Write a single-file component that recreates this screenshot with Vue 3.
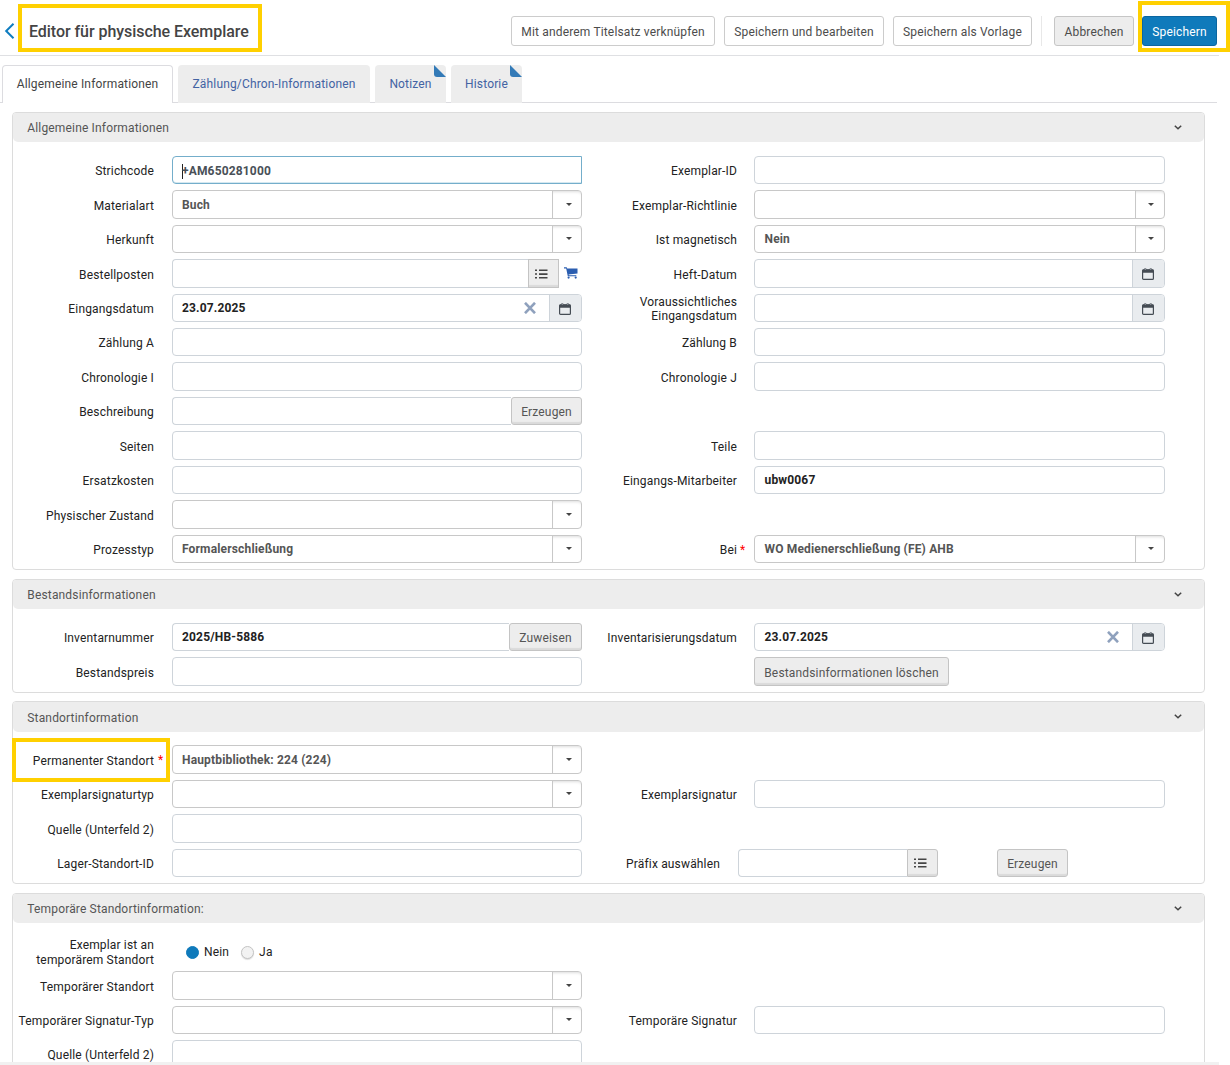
<script setup>
const t = (label, value = '', extra = {}) => ({ kind: 'text', label, value, ...extra })
const s = (label, value = '', extra = {}) => ({ kind: 'select', label, value, ...extra })
const d = (label, value = '') => ({ kind: 'date', label, value })

const tabs = [
  { name: 'Allgemeine Informationen', cls: 'tab-general' },
  { name: 'Zählung/Chron-Informationen', cls: 'tab-chron' },
  { name: 'Notizen', cls: 'tab-small', marked: true },
  { name: 'Historie', cls: 'tab-small', marked: true },
]

const sections = [
  {
    title: 'Allgemeine Informationen',
    cls: 'general',
    rows: [
      [t('Strichcode', '+AM650281000', { focus: true }), t('Exemplar-ID')],
      [s('Materialart', 'Buch'), s('Exemplar-Richtlinie')],
      [s('Herkunft'), s('Ist magnetisch', 'Nein')],
      [{ kind: 'order', label: 'Bestellposten' }, d('Heft-Datum')],
      [d('Eingangsdatum', '23.07.2025'), d('Voraussichtliches Eingangsdatum')],
      [t('Zählung A'), t('Zählung B')],
      [t('Chronologie I'), t('Chronologie J')],
      [t('Beschreibung', '', { button: 'Erzeugen' })],
      [t('Seiten'), t('Teile')],
      [t('Ersatzkosten'), t('Eingangs-Mitarbeiter', 'ubw0067')],
      [s('Physischer Zustand')],
      [s('Prozesstyp', 'Formalerschließung'), s('Bei', 'WO Medienerschließung (FE) AHB', { required: true })],
    ],
  },
  {
    title: 'Bestandsinformationen',
    cls: 'holdings',
    rows: [
      [t('Inventarnummer', '2025/HB-5886', { button: 'Zuweisen' }), d('Inventarisierungsdatum', '23.07.2025')],
      [t('Bestandspreis'), { kind: 'action', label: '', value: 'Bestandsinformationen löschen' }],
    ],
  },
  {
    title: 'Standortinformation',
    cls: 'location',
    rows: [
      [s('Permanenter Standort', 'Hauptbibliothek: 224 (224)', { required: true, marked: true })],
      [s('Exemplarsignaturtyp'), t('Exemplarsignatur')],
      [t('Quelle (Unterfeld 2)')],
      [t('Lager-Standort-ID'), { kind: 'prefix', label: 'Präfix auswählen' }],
    ],
  },
  {
    title: 'Temporäre Standortinformation:',
    cls: 'temporary',
    rows: [
      [{ kind: 'radio', label: 'Exemplar ist an temporärem Standort' }],
      [s('Temporärer Standort')],
      [s('Temporärer Signatur-Typ'), t('Temporäre Signatur')],
      [t('Quelle (Unterfeld 2)')],
    ],
  },
]
</script>

<template>
  <div class="page">
    <header class="topbar">
      <svg class="back" width="11" height="18" viewBox="0 0 11 18"><path d="M9.5 1.8 2.2 9l7.3 7.2" /></svg>
      <h1 class="title">Editor für physische Exemplare</h1>
      <div class="actions">
        <button class="btn w-link">Mit anderem Titelsatz verknüpfen</button>
        <button class="btn w-edit">Speichern und bearbeiten</button>
        <button class="btn w-template">Speichern als Vorlage</button>
        <span class="divider"></span>
        <button class="btn cancel">Abbrechen</button>
        <span class="save-wrap"><button class="btn save">Speichern</button></span>
      </div>
    </header>

    <nav class="tabs">
      <a v-for="(tab, i) in tabs" :key="tab.name" class="tab" :class="[tab.cls, { active: i === 0 }]">
        {{ tab.name }}<i v-if="tab.marked" class="corner"></i>
      </a>
    </nav>

    <main>
      <section v-for="sec in sections" :key="sec.title" class="panel" :class="sec.cls">
        <div class="panel-head">
          <span>{{ sec.title }}</span>
          <svg width="8" height="5" viewBox="0 0 8 5"><path d="M.8.7 4 3.8 7.2.7" /></svg>
        </div>
        <div class="rows">
          <div v-for="(row, r) in sec.rows" :key="r" class="row" :class="{ 'radio-row': row[0].kind === 'radio' }">
            <div v-for="(f, c) in row" :key="c" class="cell" :class="[c ? 'right' : 'left', f.kind]">
              <label :class="{ marked: f.marked, double: f.label.length > 30 }">{{ f.label }}</label>
              <span class="req">{{ f.required ? '*' : '' }}</span>

              <div v-if="f.kind === 'text'" class="group">
                <div class="input" :class="{ focus: f.focus, joined: f.button }">
                  <i v-if="f.focus" class="caret"></i>{{ f.value }}
                </div>
                <button v-if="f.button" class="grey" :class="f.button.toLowerCase()">{{ f.button }}</button>
              </div>

              <div v-else-if="f.kind === 'select'" class="group select-box">
                <span class="value">{{ f.value }}</span>
                <span class="arrow"><i></i></span>
              </div>

              <div v-else-if="f.kind === 'date'" class="group date-box">
                <span class="value">{{ f.value }}</span>
                <svg v-if="f.value" class="clear" width="12" height="12" viewBox="0 0 12 12"><path d="M1 .8 11 11.2M11 .8 1 11.2" /></svg>
                <span class="addon">
                  <svg width="12" height="12" viewBox="0 0 12 12">
                    <rect x=".6" y="1.8" width="10.8" height="9.6" rx="1" fill="none" stroke="#454c54" stroke-width="1.2" />
                    <path d="M.6 1.6h10.8v3.2H.6zM2.4.2h1.8v2H2.4zM7.8.2h1.8v2H7.8z" fill="#454c54" />
                    <path d="M2.7.6h1.2v1.2H2.7zM8.1.6h1.2v1.2H8.1z" fill="#a9afb5" />
                  </svg>
                </span>
              </div>

              <div v-else-if="f.kind === 'order' || f.kind === 'prefix'" class="group">
                <div class="input joined"></div>
                <button class="grey list">
                  <svg width="13" height="10" viewBox="0 0 13 10"><path d="M0 .5h2v1.6H0zM0 4.2h2v1.6H0zM0 7.9h2v1.6H0zM4 .5h8.5v1.5H4zM4 4.2h8.5v1.7H4zM4 8h8.5v1.5H4z" /></svg>
                </button>
                <svg v-if="f.kind === 'order'" class="cart" width="14" height="12" viewBox="0 0 14 12">
                  <path d="M0 .3h2.7l.5 1.2h10.3v4.9l-8.9 1 .2.8h7.5v1H3.8L2.2 1.4H0z" />
                  <circle cx="4.6" cy="10.6" r="1.1" /><circle cx="11.7" cy="10.6" r="1.1" />
                </svg>
                <button v-else class="grey generate">Erzeugen</button>
              </div>

              <button v-else-if="f.kind === 'action'" class="grey remove">{{ f.value }}</button>

              <div v-else class="radios">
                <i class="dot on"></i><span>Nein</span><i class="dot"></i><span>Ja</span>
              </div>
            </div>
          </div>
        </div>
      </section>
    </main>
    <div class="foot"></div>
  </div>
</template>

<style>
body {
  margin: 0;
  background: #fff;
}
</style>

<style scoped>
*,
*::after {
  box-sizing: border-box;
}
.page {
  width: 1230px;
  height: 1065px;
  overflow: hidden;
  display: flex;
  flex-direction: column;
  font: 12px/15px Roboto, 'Liberation Sans', sans-serif;
  letter-spacing: 0.16px;
  color: #222;
}
button {
  font: inherit;
  letter-spacing: inherit;
  padding: 0;
  white-space: nowrap;
}
.topbar {
  width: 1219px;
  height: 56px;
  flex: none;
  border-bottom: 1px solid #dfe0e3;
  display: flex;
  align-items: flex-start;
}
.back {
  margin: 22px 0 0 4px;
  fill: none;
  stroke: #0f7dc0;
  stroke-width: 2;
}
.title {
  margin: 4px 0 0 3px;
  width: 244px;
  height: 48px;
  border: 4px solid #ffd000;
  padding: 4px 0 0 7px;
  font-size: 16px;
  line-height: 39px;
  font-weight: 500;
  letter-spacing: -0.05px;
  color: #444;
  white-space: nowrap;
}
.actions {
  margin: 16px 2px 0 auto;
  display: flex;
}
.btn {
  height: 30px;
  border: 1px solid #ccc;
  border-radius: 3px;
  background: #fff;
  color: #4c4c4c;
  margin-right: 9px;
  padding-top: 2px;
}
.w-link { width: 204px; }
.w-edit { width: 160px; }
.w-template { width: 139px; }
.divider {
  width: 1px;
  background: #e8e8e8;
  margin-right: 12px;
}
.cancel {
  width: 80px;
  background: #ededed;
  border-color: #c6c6c6;
  margin-right: 8px;
}
.save-wrap {
  position: relative;
}
.save-wrap::after {
  content: '';
  position: absolute;
  left: -4px;
  top: -15px;
  width: 92px;
  height: 51px;
  border: 4px solid #ffd000;
}
.save {
  width: 75px;
  margin: 0;
  color: #fff;
  background: #0f7abb;
  border-color: #0b66a0;
}
.tabs {
  width: 1217px;
  height: 38px;
  flex: none;
  margin-top: 9px;
  padding-left: 2px;
  display: flex;
  gap: 5px;
  border-bottom: 1px solid #dcdce0;
}
.tab {
  position: relative;
  height: 38px;
  background: #ededed;
  color: #4363a3;
  border-radius: 4px 4px 0 0;
  line-height: 38px;
  text-align: center;
  white-space: nowrap;
}
.tab.active {
  background: #fff;
  color: #444;
  border: 1px solid #dcdce0;
  border-bottom: 0;
  line-height: 36px;
}
.tab-general { width: 171px; }
.tab-chron { width: 192px; }
.tab-small { width: 71px; }
.corner {
  position: absolute;
  right: 0;
  top: 0;
  width: 12px;
  height: 12px;
  background: #337ab7;
  border-bottom-left-radius: 3px;
  clip-path: polygon(0 0, 100% 100%, 0 100%);
}
main {
  height: 959px;
  flex: none;
  overflow: hidden;
  padding: 9px 0 0 12px;
}
.panel {
  width: 1193px;
  border: 1px solid #dcdcdc;
  border-radius: 4px;
}
.panel-head {
  height: 29px;
  background: #ededed;
  border-radius: 3px 3px 5px 5px;
  display: flex;
  align-items: center;
  justify-content: space-between;
  padding: 1px 22px 0 14.3px;
  color: #555;
}
.panel-head svg {
  fill: none;
  stroke: #444;
  stroke-width: 1.5;
  margin-top: -2px;
}
.general { height: 458px; margin-bottom: 9px; }
.holdings { height: 114px; margin-bottom: 8px; }
.location { height: 183px; margin-bottom: 9px; }
.location .panel-head {
  height: 30px;
  padding-top: 2px;
}
.location .panel-head svg { margin-top: -4px; }
.temporary { height: 230px; }
.rows {
  padding-top: 13.95px;
}
.location .rows { padding-top: 13.3px; }
.temporary .rows { padding-top: 13px; }
.row {
  height: 34.43px;
  display: flex;
}
.cell {
  height: 28.4px;
  display: flex;
}
.left { width: 569px; }
.right { width: 583px; }
label {
  width: 141px;
  flex: none;
  text-align: right;
  line-height: 29px;
  padding-top: 1.4px;
  white-space: nowrap;
}
.right label {
  width: 155px;
}
.right.prefix label {
  width: 138px;
}
label.double {
  white-space: normal;
  line-height: 14px;
  padding: 1px 0 0 30px;
}
.req {
  width: 18px;
  flex: none;
  padding-left: 4px;
  line-height: 31px;
  color: #f00;
}
.right .req {
  width: 17px;
  padding-left: 3px;
}
.right.prefix .req {
  width: 18px;
}
label.marked {
  position: relative;
}
label.marked::after {
  content: '';
  position: absolute;
  left: -1px;
  top: -7px;
  width: 158px;
  height: 44px;
  border: 4px solid #ffd000;
}
.group {
  flex: 1;
  display: flex;
  height: 28.4px;
}
.input {
  flex: 1;
  border: 1px solid #ced4da;
  border-radius: 4px;
  padding-left: 9px;
  line-height: 27px;
  font-weight: 700;
  white-space: nowrap;
}
.input.joined {
  border-radius: 4px 0 0 4px;
  border-right: 0;
}
.input.focus {
  border-color: #74aecb;
  border-radius: 4px 0 0 4px;
  box-shadow: inset 0 -1px 0 #d5e8f0;
  color: #495057;
  padding-top: 1px;
}
.caret {
  display: inline-block;
  width: 1px;
  height: 15px;
  margin-right: -1px;
  background: #222;
  vertical-align: -4px;
}
.select-box,
.date-box {
  border: 1px solid #c8c8c8;
  border-radius: 4px;
}
.date-box {
  border-color: #ced4da;
}
.value {
  flex: 1;
  padding-left: 9px;
  line-height: 27px;
  font-weight: 700;
  color: #555;
  white-space: nowrap;
}
.right .value,
.right .input {
  padding-left: 9.5px;
}
.select-box .value {
  padding-top: 0.4px;
}
.date-box .value {
  color: #222;
}
.arrow {
  width: 29px;
  border-left: 1px solid #c8c8c8;
  box-shadow: inset 0 3px 3px -2px #ddd;
  border-radius: 0 3px 0 0;
  display: flex;
  align-items: center;
  justify-content: center;
  padding: 0 0 0 3px;
}
.right .arrow {
  padding-left: 1px;
}
.arrow i {
  border: 3px solid transparent;
  border-top-color: #444;
  border-bottom: 0;
}
.clear {
  margin: 7px 13px 0 0;
  fill: none;
  stroke: #8fa1bd;
  stroke-width: 2.6;
}
.addon {
  width: 32px;
  background: #e9ecef;
  border-left: 1px solid #ced4da;
  border-radius: 0 3px 3px 0;
  display: flex;
  align-items: center;
  justify-content: center;
  padding: 2px 1px 0 0;
}
.grey {
  height: 28.4px;
  flex: none;
  border: 1px solid #c4c4c4;
  border-radius: 3px;
  background: #ededed;
  box-shadow: inset 0 -3px 1px -1px #dadada;
  color: #555;
  padding-top: 3px;
}
.erzeugen,
.generate { width: 71px; }
.zuweisen { width: 73px; }
.remove { width: 195px; }
.generate { margin: 0 97px 0 59px; }
.list {
  width: 31px;
  border-radius: 0 3px 3px 0;
  display: flex;
  align-items: center;
  justify-content: center;
  padding: 1px 4px 0 0;
  fill: #444;
}
.order .list {
  border-radius: 0;
}
.cart {
  margin: 8px 4px 0 5px;
  fill: #2a5db0;
}
.radio-row {
  height: 35.2px;
}
.radio-row label.double {
  line-height: 15px;
  padding: 1.6px 0 0 20px;
}
.radios {
  display: flex;
  align-items: center;
  height: 32px;
  padding-left: 14px;
}
.radios span {
  margin: 0 12px 0 5px;
  padding-top: 1px;
}
.dot {
  width: 13px;
  height: 13px;
  border-radius: 50%;
  background: #f2f2f2;
  border: 1px solid #c4c4c4;
  box-shadow: 0 1px 1px #ddd;
}
.dot.on {
  background: #0f7abb;
  border-color: #0f7abb;
  box-shadow: none;
}
.foot {
  width: 1219px;
  height: 3px;
  flex: none;
  background: #f1f1f1;
}
</style>
